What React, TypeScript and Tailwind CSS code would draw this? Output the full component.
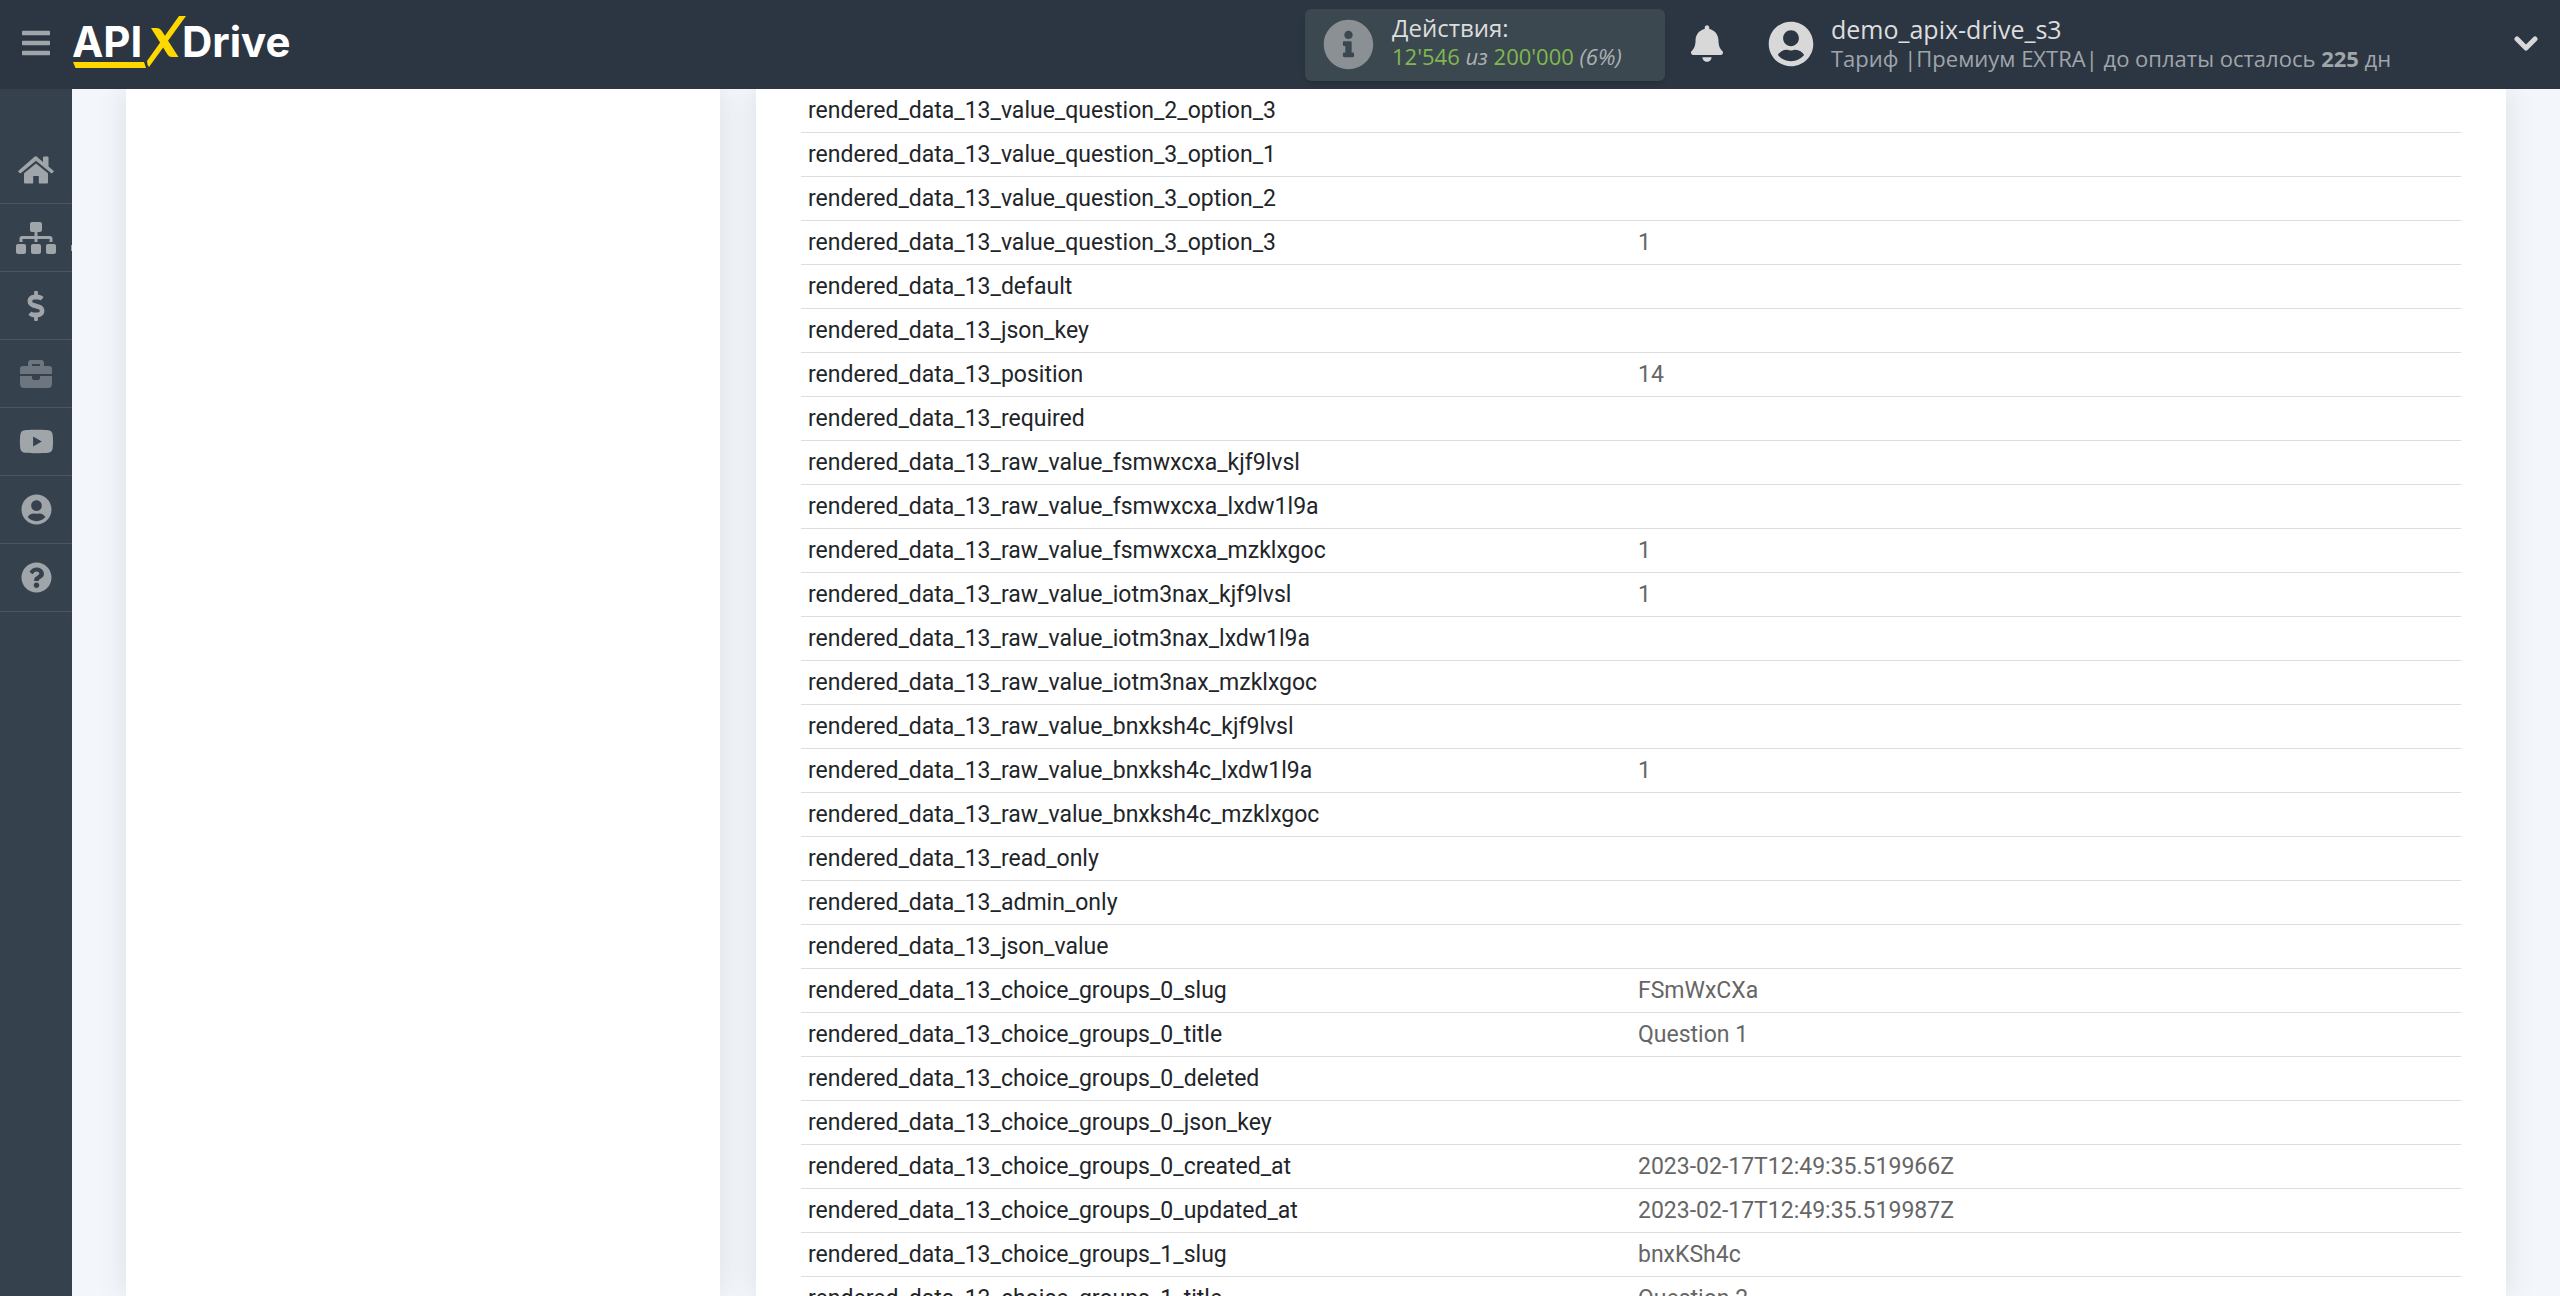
import type { ReactNode } from "react";
import {
  FaBars,
  FaBell,
  FaDollarSign,
  FaInfoCircle,
  FaQuestionCircle,
  FaSitemap,
  FaUserCircle,
  FaYoutube,
} from "react-icons/fa";

interface DataRow {
  name: string;
  value?: string;
}

interface NavItem {
  label: string;
  icon: ReactNode;
  muted?: boolean;
  hasSubmenu?: boolean;
}

const rows: DataRow[] = [
  { name: "rendered_data_13_value_question_2_option_3" },
  { name: "rendered_data_13_value_question_3_option_1" },
  { name: "rendered_data_13_value_question_3_option_2" },
  { name: "rendered_data_13_value_question_3_option_3", value: "1" },
  { name: "rendered_data_13_default" },
  { name: "rendered_data_13_json_key" },
  { name: "rendered_data_13_position", value: "14" },
  { name: "rendered_data_13_required" },
  { name: "rendered_data_13_raw_value_fsmwxcxa_kjf9lvsl" },
  { name: "rendered_data_13_raw_value_fsmwxcxa_lxdw1l9a" },
  { name: "rendered_data_13_raw_value_fsmwxcxa_mzklxgoc", value: "1" },
  { name: "rendered_data_13_raw_value_iotm3nax_kjf9lvsl", value: "1" },
  { name: "rendered_data_13_raw_value_iotm3nax_lxdw1l9a" },
  { name: "rendered_data_13_raw_value_iotm3nax_mzklxgoc" },
  { name: "rendered_data_13_raw_value_bnxksh4c_kjf9lvsl" },
  { name: "rendered_data_13_raw_value_bnxksh4c_lxdw1l9a", value: "1" },
  { name: "rendered_data_13_raw_value_bnxksh4c_mzklxgoc" },
  { name: "rendered_data_13_read_only" },
  { name: "rendered_data_13_admin_only" },
  { name: "rendered_data_13_json_value" },
  { name: "rendered_data_13_choice_groups_0_slug", value: "FSmWxCXa" },
  { name: "rendered_data_13_choice_groups_0_title", value: "Question 1" },
  { name: "rendered_data_13_choice_groups_0_deleted" },
  { name: "rendered_data_13_choice_groups_0_json_key" },
  { name: "rendered_data_13_choice_groups_0_created_at", value: "2023-02-17T12:49:35.519966Z" },
  { name: "rendered_data_13_choice_groups_0_updated_at", value: "2023-02-17T12:49:35.519987Z" },
  { name: "rendered_data_13_choice_groups_1_slug", value: "bnxKSh4c" },
  { name: "rendered_data_13_choice_groups_1_title", value: "Question 2" },
];

const navItems: NavItem[] = [
  { label: "Главная", icon: <HomeIcon /> },
  { label: "Связи", icon: <FaSitemap className="h-8 w-10" />, hasSubmenu: true },
  { label: "Оплата", icon: <FaDollarSign className="h-[30px] w-[30px]" /> },
  { label: "Инструменты", icon: <BriefcaseIcon />, muted: true },
  { label: "Видео", icon: <FaYoutube className="h-[35px] w-[35px]" /> },
  { label: "Профиль", icon: <FaUserCircle className="h-[31px] w-[31px]" /> },
  { label: "Помощь", icon: <FaQuestionCircle className="h-[31px] w-[31px]" /> },
];

function HomeIcon() {
  return (
    <svg viewBox="0 0 36 28" className="h-7 w-9" fill="currentColor">
      <path d="M18 0 L25 6 V1.5 Q25 .5 26 .5 H29.500 Q30.500 .5 30.500 1.500 V10.500 L35.500 14.700 Q36 15.300 35.500 15.900 L34.300 17.100 Q33.600 17.600 33 17 L18 4.800 L3 17 Q2.400 17.600 1.700 17.100 L.5 15.900 Q0 15.300 .5 14.700 L16.500 .8 Q18 -.2 19.500 .8 Z" />
      <path d="M18 7.500 L30 17.300 V26.500 Q30 27.500 29 27.500 H21.500 Q20.800 27.500 20.800 26.800 V20 H15.200 V26.800 Q15.200 27.500 14.500 27.500 H7 Q6 27.500 6 26.500 V17.300 Z" />
    </svg>
  );
}

function BriefcaseIcon() {
  return (
    <svg viewBox="0 0 32 28" className="h-7 w-8" fill="currentColor">
      <path
        fillRule="evenodd"
        d="M11 0 H21 Q24 0 24 3 V6 H29 Q32 6 32 9 V14 H0 V9 Q0 6 3 6 H8 V3 Q8 0 11 0 Z M12 4 V6 H20 V4 Z"
      />
      <path d="M0 16 H12 V18 Q12 20 14 20 H18 Q20 20 20 18 V16 H32 V24 Q32 28 28 28 H4 Q0 28 0 24 Z" />
    </svg>
  );
}

function ChevronIcon() {
  return (
    <svg viewBox="0 0 24 16" className="h-4 w-6" fill="none" stroke="currentColor" strokeWidth="5">
      <path d="M3 3 L12 12 L21 3" strokeLinecap="round" strokeLinejoin="round" />
    </svg>
  );
}

function Logo() {
  return (
    <svg viewBox="0 0 220 53" className="h-[53px] w-[220px]" role="img" aria-label="APIXDrive">
      <g fill="#ffffff" fontFamily="Inter, sans-serif" fontWeight="700" fontSize="42">
        <text x="-1" y="41">API</text>
        <text x="109" y="41">Drive</text>
      </g>
      <g fill="#ffd800">
        <path d="M78 12 H84 Q87 12 88.500 14.500 L105.500 41 H99 Q96 41 94.500 38.500 Z" />
        <path d="M106 0 H113 L76 51 Q74 49 74 45 Z" />
        <path d="M0 46 H71 L73 52 H2.500 Z" />
      </g>
    </svg>
  );
}

function Header() {
  return (
    <header className="sticky top-0 z-10 flex h-[89px] items-center bg-[#2c3643] px-[22px] font-['Open_Sans','Noto_Sans',sans-serif]">
      <div className="flex items-center pb-1">
        <button aria-label="Меню" className="text-[#a0a5a9]">
          <FaBars className="h-8 w-7" />
        </button>
        <a href="#" className="ml-[23px]">
          <Logo />
        </a>
      </div>

      <div className="ml-auto flex h-[72px] w-[360px] items-center rounded-md bg-[#3c4850] pl-[18px] shadow-md">
        <FaInfoCircle className="h-[51px] w-[51px] text-[#8a9093]" />
        <div className="ml-[18px] pb-1.5 text-[22px] leading-[29px]">
          <div className="text-2xl leading-[29px] text-[#dddddd]">Действия:</div>
          <div className="italic text-[#aab0b5]">
            <span className="not-italic text-[#80b850]">12'546</span> из{" "}
            <span className="not-italic text-[#80b850]">200'000</span> (6%)
          </div>
        </div>
      </div>

      <button aria-label="Уведомления" className="ml-[26px] pb-0.5 text-[#d8d8d8]">
        <FaBell className="h-[37px] w-8" />
      </button>

      <div className="ml-[45px] flex w-[746px] items-center pb-0.5">
        <FaUserCircle className="h-[46px] w-[46px] text-[#d8d8d8]" />
        <div className="ml-[17px]">
          <div className="text-[25px] leading-[29px] text-[#dddddd]">demo_apix-drive_s3</div>
          <div className="text-[22px] leading-[29px] text-[#a0a5a9]">
            Тариф |Премиум EXTRA| до оплаты осталось <b>225</b> дн
          </div>
        </div>
      </div>

      <button aria-label="Открыть меню профиля" className="pb-0.5 text-[#d8d8d8]">
        <ChevronIcon />
      </button>
    </header>
  );
}

function Sidebar() {
  return (
    <aside className="w-[72px] shrink-0 bg-[#36414e] pt-[47px]">
      <nav>
        {navItems.map((item) => (
          <a
            key={item.label}
            href="#"
            aria-label={item.label}
            className={`relative flex h-[68px] items-center justify-center border-b border-[#4a5561] ${
              item.muted ? "text-[#6d757f]" : "text-[#a0a5a9]"
            }`}
          >
            {item.icon}
            {item.hasSubmenu && <span className="absolute bottom-5 right-0 h-1.5 w-px bg-[#a0a5a9]" />}
          </a>
        ))}
      </nav>
    </aside>
  );
}

export default function App() {
  return (
    <div className="flex h-screen flex-col overflow-hidden bg-[#f3f6fb]">
      <Header />
      <div className="flex min-h-0 flex-1">
        <Sidebar />
        <main className="flex min-w-0 flex-1 gap-9 overflow-hidden px-[54px]">
          <section className="w-[594px] shrink-0 bg-white shadow-[0_0_30px_rgba(0,0,0,0.1)]" />
          <section className="min-w-0 flex-1 bg-white px-[45px] shadow-[0_0_30px_rgba(0,0,0,0.1)]">
            <table className="w-full table-fixed border-collapse text-left font-[Roboto,sans-serif] text-[23px] leading-[35px]">
              <tbody>
                {rows.map((row) => (
                  <tr key={row.name} className="border-b border-[#dbdddf]">
                    <th scope="row" className="px-[7px] py-1 font-normal text-[#212529]">
                      {row.name}
                    </th>
                    <td className="px-[7px] py-1 text-[#666666]">{row.value}</td>
                  </tr>
                ))}
              </tbody>
            </table>
          </section>
        </main>
      </div>
    </div>
  );
}
